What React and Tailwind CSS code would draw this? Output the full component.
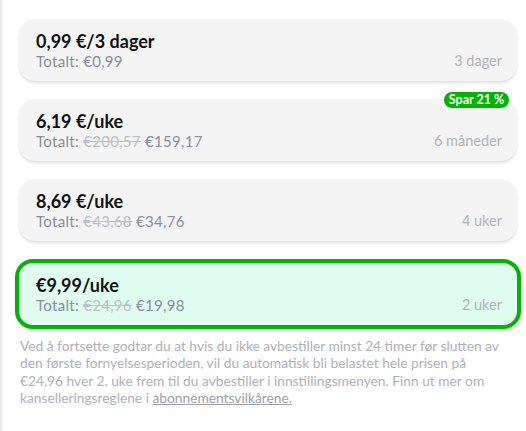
import React from "react";

const plans = [
  { title: "0,99 €/3 dager", old: null, total: "€0,99", period: "3 dager" },
  { title: "6,19 €/uke", old: "€200,57", total: "€159,17", period: "6 måneder", badge: "Spar 21 %" },
  { title: "8,69 €/uke", old: "€43,68", total: "€34,76", period: "4 uker" },
];

function CardBody({ title, old, total, period }) {
  return (
    <>
      <div className="text-[18px] leading-[22px] font-bold text-[#111111]">{title}</div>
      <div className="flex items-end justify-between">
        <div className="text-[15px] leading-[18px] tracking-[0.3px] text-[#8a8f9b]">
          Totalt:{" "}
          {old && <span className="line-through text-[#bdc0c7]">{old}</span>}
          {old && " "}
          {total}
        </div>
        <div className="text-[14.5px] leading-[18px] text-[#b3b3bb]">{period}</div>
      </div>
    </>
  );
}

export default function App() {
  return (
    <div
      className="min-h-[431px] w-[526px] border-l-2 border-[#ebebeb] bg-white"
      style={{ fontFamily: "Lato, 'Noto Sans', sans-serif" }}
    >
      <div className="flex w-[515px] flex-col gap-[18px] pl-[17px] pt-[19px]">
        {plans.map((p) => (
          <div
            key={p.title}
            className="relative h-[62px] rounded-[16px] bg-[#f4f4f4] pl-[17px] pr-[15px] pt-[11px] shadow-[0_2px_3px_rgba(0,0,0,0.13)]"
          >
            {p.badge && (
              <div className="absolute -top-[7px] right-[8px] flex h-[16px] w-[65px] items-center justify-center rounded-full bg-[#00b400] text-[12.5px] font-bold leading-none text-white">
                {p.badge}
              </div>
            )}
            <CardBody {...p} />
          </div>
        ))}
        <div className="-mx-[4px] h-[70px] rounded-[18px] border-4 border-[#00b400] bg-[#e0fbef] pl-[17px] pr-[15px] pt-[11px] shadow-[0_2px_3px_rgba(0,0,0,0.1)]">
          <CardBody title="€9,99/uke" old="€24,96" total="€19,98" period="2 uker" />
        </div>
      </div>
      <p className="mt-[8px] pl-[18px] pr-[8px] text-[13.75px] leading-[17.3px] text-[#b0b0b8]">
        Ved å fortsette godtar du at hvis du ikke avbestiller minst 24 timer før slutten av
        <br />
        den første fornyelsesperioden, vil du automatisk bli belastet hele prisen på
        <br />
        €24,96 hver 2. uke frem til du avbestiller i innstillingsmenyen. Finn ut mer om
        <br />
        kanselleringsreglene i <span className="underline text-[#a0a0a8]">abonnementsvilkårene.</span>
      </p>
    </div>
  );
}
